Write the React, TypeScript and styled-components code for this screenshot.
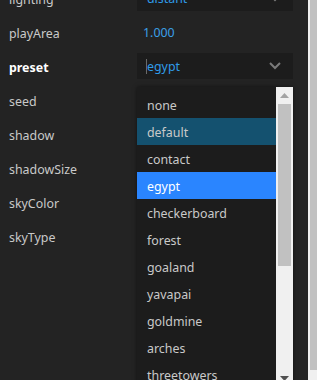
import * as React from 'react';
import styled, { createGlobalStyle } from 'styled-components';

const GlobalStyle = createGlobalStyle`
  html, body {
    margin: 0;
    padding: 0;
    background: #232323;
    overflow: hidden;
  }
  body {
    font-family: 'Noto Sans', 'Open Sans', sans-serif;
    font-size: 12.4px;
  }
`;

const presets = [
  'none',
  'default',
  'contact',
  'egypt',
  'checkerboard',
  'forest',
  'goaland',
  'yavapai',
  'goldmine',
  'arches',
  'threetowers',
];

type Prop =
  | { name: string; kind: 'select'; value: string; open?: boolean; bold?: boolean }
  | { name: string; kind: 'number'; value: string }
  | { name: string; kind: 'empty' };

const props: Prop[] = [
  { name: 'lighting', kind: 'select', value: 'distant' },
  { name: 'playArea', kind: 'number', value: '1.000' },
  { name: 'preset', kind: 'select', value: 'egypt', open: true, bold: true },
  { name: 'seed', kind: 'empty' },
  { name: 'shadow', kind: 'empty' },
  { name: 'shadowSize', kind: 'empty' },
  { name: 'skyColor', kind: 'empty' },
  { name: 'skyType', kind: 'empty' },
];

const Page = styled.div`
  display: flex;
  width: 317px;
  height: 380px;
  overflow: hidden;
`;

const Inspector = styled.div`
  flex: 1;
  margin-top: -19px;
`;

const Row = styled.div`
  position: relative;
  display: grid;
  grid-template-columns: 137px 156px;
  height: 34px;
  align-items: center;
`;

const Label = styled.div<{ $bold?: boolean }>`
  padding-left: 9px;
  padding-top: 2px;
  color: ${p => (p.$bold ? '#ffffff' : '#c9c9c9')};
  font-weight: ${p => (p.$bold ? 700 : 400)};
`;

const SelectBox = styled.div`
  position: relative;
  display: flex;
  align-items: center;
  height: 26px;
  padding-left: 10px;
  background: #1c1c1c;
  color: #2f9be8;
`;

const Caret = styled.span`
  width: 1px;
  height: 15px;
  background: #6a6a6a;
  margin-left: -1px;
`;

const NumberValue = styled.div`
  padding-left: 6px;
  color: #3a9fe6;
`;

const Chevron = styled.svg`
  position: absolute;
  right: 12px;
  top: 9px;
`;

const Dropdown = styled.div`
  position: absolute;
  left: 137px;
  top: 38px;
  width: 156px;
  height: 300px;
  display: flex;
  background: #1c1c1c;
  box-shadow: 0 0 4px rgba(0, 0, 0, 0.5);
  z-index: 2;
`;

const List = styled.div`
  flex: 1;
  padding-top: 4px;
`;

const Option = styled.div<{ $state?: 'hover' | 'selected' }>`
  height: 27px;
  display: flex;
  align-items: center;
  padding: 1px 0 0 10px;
  box-sizing: border-box;
  color: ${p => (p.$state === 'selected' ? '#ffffff' : '#c9c9c9')};
  background: ${p =>
    p.$state === 'selected' ? '#2a85ff' : p.$state === 'hover' ? '#14516f' : 'transparent'};
`;

const ListScroll = styled.div`
  width: 17px;
  background: #f0f0f0;
  display: flex;
  flex-direction: column;
  align-items: center;
`;

const ArrowBtn = styled.div`
  height: 17px;
  width: 17px;
  display: flex;
  align-items: center;
  justify-content: center;
`;

const Thumb = styled.div<{ $h: number }>`
  width: 13px;
  height: ${p => p.$h}px;
  background: #c1c1c1;
`;

const Spacer = styled.div`
  flex: 1;
`;

const PageScroll = styled.div`
  width: 9px;
  margin-left: 15px;
  display: flex;
  flex-direction: column;
  background: #f0f0f0;
`;

const PageThumb = styled.div`
  margin-left: 2px;
  height: 370px;
  background: #c1c1c1;
`;

const Tri = ({ up, color }: { up?: boolean; color: string }) => (
  <svg width="9" height="5" viewBox="0 0 9 5">
    <path d={up ? 'M0 5 L4.5 0 L9 5 Z' : 'M0 0 L4.5 5 L9 0 Z'} fill={color} />
  </svg>
);

const ChevronDown = () => (
  <Chevron width="12" height="8" viewBox="0 0 12 8">
    <path d="M1 1 L6 6 L11 1" stroke="#7a7a7a" strokeWidth="2" fill="none" />
  </Chevron>
);

export default function App() {
  return (
    <Page>
      <GlobalStyle />
      <Inspector>
        {props.map(p => (
          <Row key={p.name}>
            <Label $bold={'bold' in p && p.bold}>{p.name}</Label>
            {p.kind === 'select' && (
              <SelectBox>
                {p.open && <Caret />}
                {p.value}
                <ChevronDown />
              </SelectBox>
            )}
            {p.kind === 'number' && <NumberValue>{p.value}</NumberValue>}
            {p.kind === 'select' && p.open && (
              <Dropdown>
                <List>
                  {presets.map(name => (
                    <Option
                      key={name}
                      $state={name === 'egypt' ? 'selected' : name === 'default' ? 'hover' : undefined}
                    >
                      {name}
                    </Option>
                  ))}
                </List>
                <ListScroll>
                  <ArrowBtn>
                    <Tri up color="#a3a3a3" />
                  </ArrowBtn>
                  <Thumb $h={162} />
                  <Spacer />
                  <ArrowBtn>
                    <Tri color="#505050" />
                  </ArrowBtn>
                </ListScroll>
              </Dropdown>
            )}
          </Row>
        ))}
      </Inspector>
      <PageScroll>
        <PageThumb />
        <Spacer />
      </PageScroll>
    </Page>
  );
}
